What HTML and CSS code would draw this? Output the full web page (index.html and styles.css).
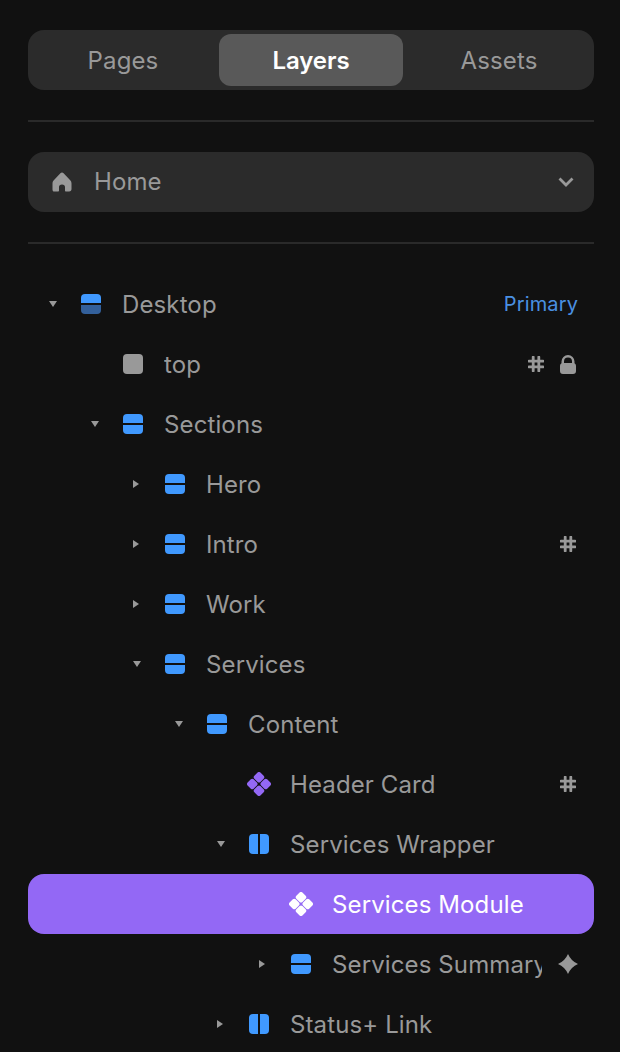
FILE: index.html
```html
<!DOCTYPE html>
<html lang="en">
<head>
    <meta charset="UTF-8">
    <meta name="viewport" content="width=device-width, initial-scale=1.0">
    <title>Layers</title>
    <link rel="stylesheet" href="styles.css">
</head>
<body>
    <svg class="defs" width="0" height="0" aria-hidden="true">
        <symbol id="i-stack" viewBox="0 0 20 20"><path d="M4 0h12a4 4 0 0 1 4 4v5H0V4a4 4 0 0 1 4-4z"/><path d="M0 11h20v5a4 4 0 0 1-4 4H4a4 4 0 0 1-4-4z"/></symbol>
        <symbol id="i-stack-dim" viewBox="0 0 20 20"><path d="M4 0h12a4 4 0 0 1 4 4v5H0V4a4 4 0 0 1 4-4z"/><path fill="#33609b" d="M0 11h20v5a4 4 0 0 1-4 4H4a4 4 0 0 1-4-4z"/></symbol>
        <symbol id="i-cols" viewBox="0 0 20 20"><path d="M4 0h5v20H4a4 4 0 0 1-4-4V4a4 4 0 0 1 4-4z"/><path d="M11 0h5a4 4 0 0 1 4 4v12a4 4 0 0 1-4 4h-5z"/></symbol>
        <symbol id="i-comp" viewBox="0 0 24 24"><rect x="7.700" y="0.950" width="8.600" height="8.600" rx="2" transform="rotate(45 12 5.250)"/><rect x="7.700" y="14.450" width="8.600" height="8.600" rx="2" transform="rotate(45 12 18.750)"/><rect x="0.950" y="7.700" width="8.600" height="8.600" rx="2" transform="rotate(45 5.250 12)"/><rect x="14.450" y="7.700" width="8.600" height="8.600" rx="2" transform="rotate(45 18.750 12)"/></symbol>
        <symbol id="i-hash" viewBox="0 0 16 16"><path d="M5.2 1v14M10.8 1v14M1 5.2h14M1 10.8h14" fill="none" stroke="currentColor" stroke-width="2.8" stroke-linecap="round"/></symbol>
    </svg>

    <div class="panel">
        <div class="tabs">
            <div class="tab">Pages</div>
            <div class="tab active">Layers</div>
            <div class="tab">Assets</div>
        </div>

        <div class="divider"></div>

        <div class="page-select">
            <svg class="home" viewBox="0 0 20 20"><path d="M10 0.5c.6 0 1.1.2 1.6.7l6.6 7c1 1 1.3 2 1.3 3.3v5.500c0 1.400-.8 2.500-2.400 2.500h-3.100c-.6 0-1-.4-1-1v-3.500c0-1.400-1.100-2.500-3-2.500s-3 1.100-3 2.500v3.500c0 .6-.4 1-1 1H2.900C1.300 20 .5 18.900.5 17.500V11.500c0-1.300.3-2.300 1.300-3.300l6.600-7c.5-.5 1-.7 1.600-.7z"/></svg>
            <span class="page-name">Home</span>
            <svg class="chevron" viewBox="0 0 16 10"><path d="M1.500 1.500L8 8l6.500-6.500" fill="none" stroke="currentColor" stroke-width="2.800"/></svg>
        </div>

        <div class="divider"></div>

        <div class="tree">
            <div class="row lvl-0">
                <span class="caret open"></span>
                <svg class="ico blue"><use href="#i-stack-dim"/></svg>
                <span class="label">Desktop</span>
                <span class="tag">Primary</span>
            </div>
            <div class="row lvl-1">
                <span class="caret none"></span>
                <span class="square"></span>
                <span class="label">top</span>
                <span class="meta">
                    <svg class="hash"><use href="#i-hash"/></svg>
                    <svg class="lock" viewBox="0 0 16 19"><path fill-rule="evenodd" d="M8 0a6.500 6.500 0 0 1 6.500 6.500V8.300A3 3 0 0 1 16 11v5a3 3 0 0 1-3 3H3a3 3 0 0 1-3-3v-5a3 3 0 0 1 1.500-2.700V6.500A6.500 6.500 0 0 1 8 0zm0 2.500a4 4 0 0 0-4 4V8h8V6.500a4 4 0 0 0-4-4z"/></svg>
                </span>
            </div>
            <div class="row lvl-1">
                <span class="caret open"></span>
                <svg class="ico blue"><use href="#i-stack"/></svg>
                <span class="label">Sections</span>
            </div>
            <div class="row lvl-2">
                <span class="caret"></span>
                <svg class="ico blue"><use href="#i-stack"/></svg>
                <span class="label">Hero</span>
            </div>
            <div class="row lvl-2">
                <span class="caret"></span>
                <svg class="ico blue"><use href="#i-stack"/></svg>
                <span class="label">Intro</span>
                <span class="meta"><svg class="hash"><use href="#i-hash"/></svg></span>
            </div>
            <div class="row lvl-2">
                <span class="caret"></span>
                <svg class="ico blue"><use href="#i-stack"/></svg>
                <span class="label">Work</span>
            </div>
            <div class="row lvl-2">
                <span class="caret open"></span>
                <svg class="ico blue"><use href="#i-stack"/></svg>
                <span class="label">Services</span>
            </div>
            <div class="row lvl-3">
                <span class="caret open"></span>
                <svg class="ico blue"><use href="#i-stack"/></svg>
                <span class="label">Content</span>
            </div>
            <div class="row lvl-4">
                <span class="caret none"></span>
                <svg class="ico comp purple"><use href="#i-comp"/></svg>
                <span class="label">Header Card</span>
                <span class="meta"><svg class="hash"><use href="#i-hash"/></svg></span>
            </div>
            <div class="row lvl-4">
                <span class="caret open"></span>
                <svg class="ico blue"><use href="#i-cols"/></svg>
                <span class="label">Services Wrapper</span>
            </div>
            <div class="row lvl-5 selected">
                <span class="caret none"></span>
                <svg class="ico comp"><use href="#i-comp"/></svg>
                <span class="label">Services Module</span>
            </div>
            <div class="row lvl-5">
                <span class="caret"></span>
                <svg class="ico blue"><use href="#i-stack"/></svg>
                <span class="label">Services Summary</span>
                <span class="meta spark-wrap"><svg class="spark" viewBox="0 0 20 20"><path d="M10 0Q13 7 20 10 13 13 10 20 7 13 0 10 7 7 10 0z"/></svg></span>
            </div>
            <div class="row lvl-4">
                <span class="caret"></span>
                <svg class="ico blue"><use href="#i-cols"/></svg>
                <span class="label">Status+ Link</span>
            </div>
        </div>
    </div>
</body>
</html>
```

FILE: styles.css
```css
:root { --bg: #111111; --surface: #2b2b2b; --line: #2a2a2a; --text: #999999; --blue: #4099ff; --purple: #9368f5; }

html, body { height: 100%; }
body { margin: 0; background: var(--bg); color: var(--text); font-family: Inter, "Liberation Sans", sans-serif; font-size: 24px; letter-spacing: 0.12px; overflow: hidden; }

.defs { position: absolute; }

.panel { padding: 30px 26px 0 28px; }

/* TABS */
.tabs { display: grid; grid-template-columns: 1fr 1fr 1fr; gap: 4px; height: 60px; padding: 4px 3px; box-sizing: border-box; background: var(--surface); border-radius: 16px; }
.tab { display: flex; align-items: center; justify-content: center; border-radius: 12px; }
.tab.active { background: #595959; color: #ffffff; font-weight: 600; letter-spacing: -0.1px; }

.divider { height: 2px; margin: 30px 0; background: var(--line); }

/* PAGE SELECT */
.page-select { display: flex; align-items: center; height: 60px; padding: 0 20px 0 24px; background: var(--surface); border-radius: 16px; }
.home { width: 20px; height: 20px; fill: var(--text); margin-right: 22px; }
.page-name { flex: 1; margin-bottom: 2px; }
.chevron { width: 16px; height: 10px; color: var(--text); }

/* TREE */
.row { display: flex; align-items: center; height: 60px; padding-right: 16px; border-radius: 16px; }
.lvl-0 { padding-left: 16px; }
.lvl-1 { padding-left: 58px; }
.lvl-2 { padding-left: 100px; }
.lvl-3 { padding-left: 142px; }
.lvl-4 { padding-left: 184px; }
.lvl-5 { padding-left: 226px; }

.caret { position: relative; flex: none; width: 18px; height: 18px; margin-right: 19px; }
.caret::before { content: ""; position: absolute; left: 5px; top: 5px; border-style: solid; border-width: 4.500px 0 4.500px 6px; border-color: transparent transparent transparent var(--text); }
.caret.open::before { left: 5px; top: 6px; border-width: 6px 4.500px 0 4.500px; border-color: var(--text) transparent transparent transparent; }
.caret.none::before { display: none; }

.ico { flex: none; width: 20px; height: 20px; margin-right: 21px; overflow: visible; }
.ico.blue { fill: var(--blue); color: var(--blue); }
.ico.comp { width: 24px; height: 24px; margin-left: -2px; margin-right: 19px; fill: #ffffff; }
.ico.comp.purple { fill: var(--purple); }
.square { flex: none; width: 20px; height: 20px; margin-right: 21px; background: var(--text); border-radius: 4px; }

.label { flex: 1; min-width: 0; white-space: nowrap; overflow: hidden; }
.tag { margin-left: 16px; font-size: 20px; color: #4a90e2; }
.meta { display: flex; align-items: center; gap: 16px; margin-left: 16px; margin-right: 2px; }
.spark-wrap { margin-right: 0; }
.hash { width: 16px; height: 16px; color: var(--text); }
.lock { width: 16px; height: 19px; fill: var(--text); }
.spark { width: 20px; height: 20px; fill: var(--text); }

.selected { background: var(--purple); color: #ffffff; }
```
